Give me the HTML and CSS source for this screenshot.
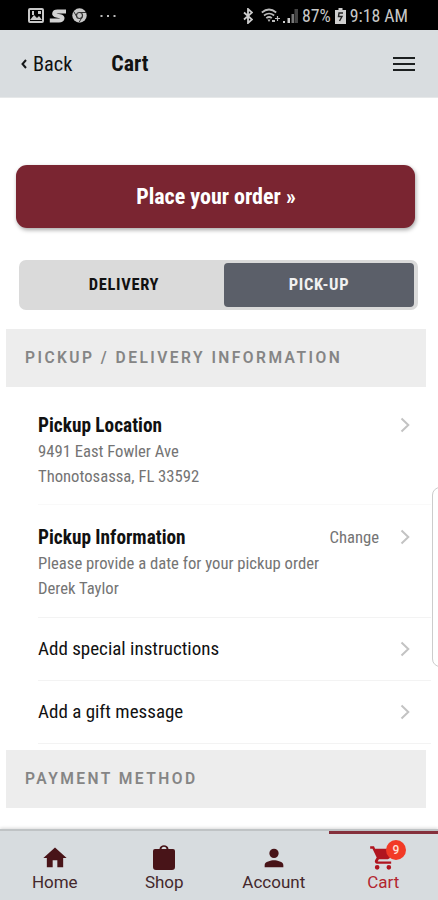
FILE: index.html
```html
<!DOCTYPE html>
<html lang="en">
<head>
<meta charset="utf-8">
<title>Cart</title>
<link rel="stylesheet" href="styles.css">
</head>
<body>
<div class="screen">
  <div class="status">
    <svg class="st-img" width="16" height="15" viewBox="0 0 16 15"><rect x="1" y="1" width="14" height="13" rx="1" fill="none" stroke="#c8c8c8" stroke-width="2"/><path d="M2 12l4-5 3 3 2-2 3 4z" fill="#c8c8c8"/><path d="M4 3h2v4H4zM10 3h3v3h-3z" fill="#c8c8c8"/></svg>
    <svg class="st-s" width="18" height="14" viewBox="0 0 18 14"><path d="M17 2.500H8.500C4.500 2.500 4 6 7.500 6.600l3.500.6c4 .6 3 4.300-1 4.300H.8" fill="none" stroke="#d2d2d2" stroke-width="4"/></svg>
    <svg class="st-chrome" width="15" height="15" viewBox="0 0 15 15"><circle cx="7.500" cy="7.500" r="7.200" fill="#c8c8c8"/><circle cx="7.500" cy="7.500" r="3" fill="#c8c8c8" stroke="#333" stroke-width="1.200"/><path d="M7.500 4.500H14M4.900 9L1.700 3.500M10.100 9L7 14.500" stroke="#333" stroke-width="1"/></svg>
    <svg class="st-dots" width="16" height="4" viewBox="0 0 16 4"><path d="M.5 1h2v2h-2zM7 1h2v2H7zM13.500 1h2v2h-2z" fill="#bbb"/></svg>
    <span class="grow"></span>
    <svg class="st-bt" width="10" height="16" viewBox="0 0 10 16"><path d="M1 4.500l8 7-4 3.500V1l4 3.500-8 7" fill="none" stroke="#ccc" stroke-width="1.800"/></svg>
    <svg class="st-wifi" width="20" height="16" viewBox="0 0 20 16"><g fill="none" stroke="#bbb" stroke-width="1.700"><path d="M.8 4.500q7.200-6 14.400 0M3 7.500q5-4 10.200 0M5.300 10.200q2.800-2.400 5.500 0"/><path d="M16.500 8v5M14 10.500h5" stroke-width="1.200"/></g><path d="M6.500 11.500h3L8 14zM11 12h3v2h-3z" fill="#bbb"/></svg>
    <svg class="st-sig" width="15" height="14" viewBox="0 0 15 14"><path d="M0 12h2v2H0zM4.500 9h2.500v5H4.500z" fill="#ccc"/><path d="M8.500 5H11v9H8.500z" fill="#777"/><path d="M11.500 0H15v14h-3.500z" fill="#444"/></svg>
    <span class="t st-pct">87%</span>
    <svg class="st-bat" width="11" height="16" viewBox="0 0 11 16"><path d="M3.500 0h4v2H11v14H0V2h3.500z" fill="#d0d0d0"/><path d="M8 5H4L3.500 8.500H7L4.500 13" fill="none" stroke="#222" stroke-width="1.400"/></svg>
    <span class="t st-time">9:18 AM</span>
  </div>

  <header class="head">
    <svg width="6" height="10" viewBox="0 0 6 10"><path d="M5 1L1.500 5 5 9" fill="none" stroke="#151719" stroke-width="2"/></svg>
    <span class="t back">Back</span>
    <span class="t title">Cart</span>
    <span class="grow"></span>
    <span class="burger"><i></i><i></i><i></i></span>
  </header>

  <main class="main">
    <button class="order"><span class="t">Place your order »</span></button>
    <div class="toggle">
      <div class="opt"><span class="t">DELIVERY</span></div>
      <div class="opt on"><span class="t">PICK-UP</span></div>
    </div>
    <h2 class="section">PICKUP / DELIVERY INFORMATION</h2>
    <div class="row tall first">
      <div class="copy"><b class="t">Pickup Location</b><span class="t">9491 East Fowler Ave</span><span class="t">Thonotosassa, FL 33592</span></div>
      <svg class="chev" width="10" height="16" viewBox="0 0 10 16"><path d="M1.500 1.500L8.300 8 1.500 14.500" /></svg>
    </div>
    <div class="row tall">
      <div class="copy"><b class="t">Pickup Information</b><span class="t">Please provide a date for your pickup order</span><span class="t">Derek Taylor</span></div>
      <span class="t change">Change</span>
      <svg class="chev" width="10" height="16" viewBox="0 0 10 16"><path d="M1.500 1.500L8.300 8 1.500 14.500" /></svg>
    </div>
    <div class="row"><span class="t link">Add special instructions</span>
      <svg class="chev" width="10" height="16" viewBox="0 0 10 16"><path d="M1.500 1.500L8.300 8 1.500 14.500" /></svg></div>
    <div class="row last"><span class="t link">Add a gift message</span>
      <svg class="chev" width="10" height="16" viewBox="0 0 10 16"><path d="M1.500 1.500L8.300 8 1.500 14.500" /></svg></div>
    <h2 class="section pay">PAYMENT METHOD</h2>
  </main>
  <div class="handle"></div>

  <nav class="tabs">
    <a class="tab"><svg width="28" height="28" viewBox="0 0 24 24"><path d="M10 20v-6h4v6h5v-8h3L12 3 2 12h3v8z"/></svg><span>Home</span></a>
    <a class="tab"><svg width="28" height="28" viewBox="0 0 28 28"><path d="M5 5h4.500C9.800 0 18.200 0 18.500 5H23q2 0 2 2v16q0 3-3 3H6q-3 0-3-3V7q0-2 2-2zm6.500 0h5c-.3-3-4.700-3-5 0z"/></svg><span>Shop</span></a>
    <a class="tab"><svg width="28" height="28" viewBox="0 0 24 24"><path d="M12 12a4 4 0 1 0 0-8 4 4 0 0 0 0 8zm0 2c-2.700 0-8 1.300-8 4v2h16v-2c0-2.700-5.300-4-8-4z"/></svg><span>Account</span></a>
    <a class="tab active"><svg width="28" height="28" viewBox="0 0 24 24"><path d="M7 18a2 2 0 1 0 0 4 2 2 0 0 0 0-4zM1 2v2h2l3.600 7.600-1.400 2.400C4.500 15.400 5.500 17 7 17h12v-2H7.400l1.100-2h7.500c.7 0 1.400-.4 1.700-1l3.600-6.500A1 1 0 0 0 20.400 4H5.200l-.9-2zM17 18a2 2 0 1 0 0 4 2 2 0 0 0 0-4z"/></svg><span>Cart</span><em class="badge">9</em></a>
  </nav>
</div>
</body>
</html>
```
FILE: styles.css
```css
* { box-sizing: border-box; }
body { margin: 0; background: #fff; font-family: "Roboto Condensed", Roboto, sans-serif; color: #111; }
.screen { position: relative; width: 438px; height: 900px; display: flex; flex-direction: column; overflow: hidden; }
.t { font-stretch: 75%; white-space: nowrap; }
.grow { flex: 1; }
.status { height: 30px; background: #000; color: #c8c8c8; display: flex; align-items: center; padding: 1px 30px 0 28px; font-size: 17.800px; flex: none; }
.st-s { margin-left: 5px; }
.st-chrome { margin-left: 5px; }
.st-dots { margin-left: 13px; }
.st-wifi { margin-left: 8px; }
.st-sig { margin-left: 2px; }
.st-pct { margin-left: 4px; }
.st-bat { margin-left: 4px; }
.st-time { margin-left: 4px; }
.head { height: 68px; background: #d9dde0; display: flex; align-items: center; padding: 0 23px 0 21px; flex: none; border-bottom: 1px solid #e6e8e9; }
.back { font-size: 20.300px; margin-left: 6px; }
.title { font-size: 21.800px; font-weight: 700; margin-left: 39px; }
.burger { width: 22px; display: flex; flex-direction: column; gap: 4px; }
.burger i { height: 2px; background: #1c1f20; }
.main { height: 731px; padding-top: 67px; flex: none; }
.order { display: flex; align-items: center; justify-content: center; width: 399px; height: 63px; margin: 0 0 0 16px; padding: 0 0 1px 1px; border: 0; border-radius: 11px; background: #7a2531; color: #fff; font: 700 22px "Roboto Condensed", Roboto, sans-serif; box-shadow: 1px 2px 4px rgba(0,0,0,.35); }
.toggle { display: flex; width: 399px; height: 50px; margin: 32px 0 0 19px; border-radius: 7px; background: #dadada; padding: 3px 4px 3px 0; font-size: 16.500px; letter-spacing: .650px; font-weight: 700; }
.opt { flex: 1; display: flex; align-items: center; justify-content: center; padding: 0 0 1px 5px; }
.opt.on { flex: 0 0 190px; background: #5b5f69; color: #f1f1f1; border-radius: 4px; padding-left: 0; }
.section { width: 420px; height: 58px; margin: 19px 0 0 6px; padding: 0 0 1px 19px; background: #ededed; display: flex; align-items: center; font-family: Roboto, sans-serif; font-size: 15.600px; color: #858585; letter-spacing: 2.450px; font-weight: 600; white-space: nowrap; }
.row { display: flex; height: 63px; margin-left: 38px; padding-right: 27px; width: 393px; border-bottom: 1px solid #f3f3f3; align-items: center; justify-content: space-between; }
.tall { height: 113px; align-items: flex-start; padding-top: 19px; }
.first { height: 118px; padding-top: 25px; border-color: #f9f9f9; }
.copy { display: flex; flex-direction: column; flex: 1; font-size: 16.650px; line-height: 24.500px; color: #747474; }
.copy b { font-size: 19.300px; line-height: 27px; margin-bottom: 1px; color: #111; }
.chev { fill: none; stroke: #c3c3c3; stroke-width: 2; margin-right: -6px; }
.tall .chev { margin-top: 5px; }
.change { font-size: 16.650px; line-height: 27px; color: #747474; margin-right: 21px; }
.link { font-size: 19px; padding-bottom: 1px; }
.pay { margin-top: 6px; }
.handle { position: absolute; left: 432px; top: 487px; width: 20px; height: 180px; border: 1px solid #ccc; border-radius: 8px; background: #fff; }
.tabs { position: relative; height: 71px; display: flex; background: #d7dcdf; border-top: 2px solid #bfc3c5; font-family: Roboto, sans-serif; font-size: 17px; flex: none; box-shadow: 0 -1px 3px rgba(0,0,0,.15); }
.tab { position: relative; width: 109.500px; display: flex; flex-direction: column; align-items: center; padding-top: 13px; color: #44282c; line-height: 20px; }
.tab svg { fill: #481418; }
.active { color: #b3262f; box-shadow: inset 0 3px #85303c; }
.active svg { fill: #b01520; }
.badge { position: absolute; left: 57.500px; top: 9px; width: 20px; height: 20px; border-radius: 50%; background: #f23a26; color: #ffe0d8; font-size: 12px; font-weight: 500; font-style: normal; line-height: 20px; text-align: center; }
```
